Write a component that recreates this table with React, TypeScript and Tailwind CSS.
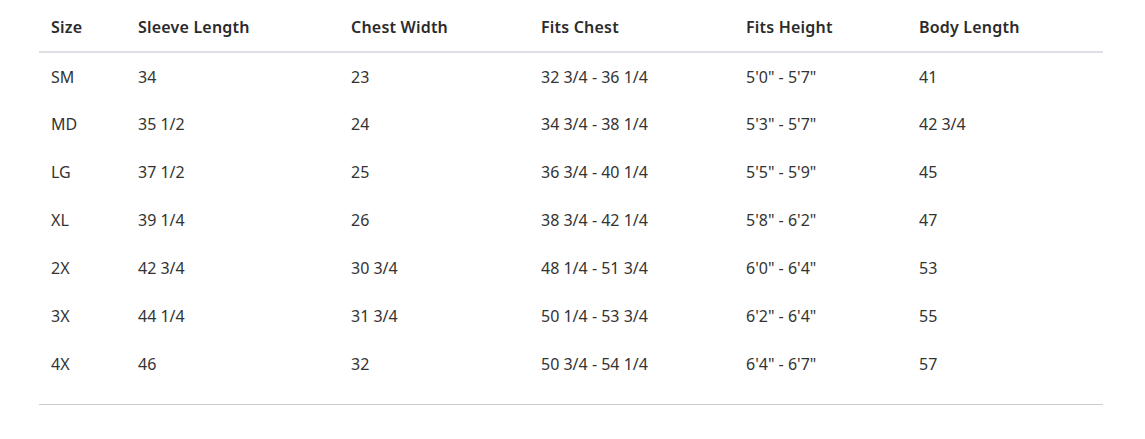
const rows = [
  ['SM', '34', '23', '32 3/4 - 36 1/4', `5'0" - 5'7"`, '41'],
  ['MD', '35 1/2', '24', '34 3/4 - 38 1/4', `5'3" - 5'7"`, '42 3/4'],
  ['LG', '37 1/2', '25', '36 3/4 - 40 1/4', `5'5" - 5'9"`, '45'],
  ['XL', '39 1/4', '26', '38 3/4 - 42 1/4', `5'8" - 6'2"`, '47'],
  ['2X', '42 3/4', '30 3/4', '48 1/4 - 51 3/4', `6'0" - 6'4"`, '53'],
  ['3X', '44 1/4', '31 3/4', '50 1/4 - 53 3/4', `6'2" - 6'4"`, '55'],
  ['4X', '46', '32', '50 3/4 - 54 1/4', `6'4" - 6'7"`, '57'],
];

const headers = ['Size', 'Sleeve Length', 'Chest Width', 'Fits Chest', 'Fits Height', 'Body Length'];
const widths = ['w-[87px]', 'w-[213px]', 'w-[190px]', 'w-[205px]', 'w-[173px]', ''];

export default function App() {
  return (
    <div className="bg-white px-[39px] pr-[42px] pt-[2px] font-['Noto_Sans',sans-serif] text-[16px]">
      <div className="border-b border-[#cccccc] pb-4">
        <table className="w-full table-fixed border-collapse">
          <thead>
            <tr className="border-b-2 border-[#dde1e6]">
              {headers.map((h, i) => (
                <th key={h} className={`${widths[i]} h-[50px] px-3 text-left font-semibold tracking-[0.2px] text-[#2b2b2b]`}>
                  {h}
                </th>
              ))}
            </tr>
          </thead>
          <tbody>
            {rows.map((r) => (
              <tr key={r[0]}>
                {r.map((c, i) => (
                  <td key={i} className="h-12 px-3 text-[#333333]">
                    {c}
                  </td>
                ))}
              </tr>
            ))}
          </tbody>
        </table>
      </div>
    </div>
  );
}
